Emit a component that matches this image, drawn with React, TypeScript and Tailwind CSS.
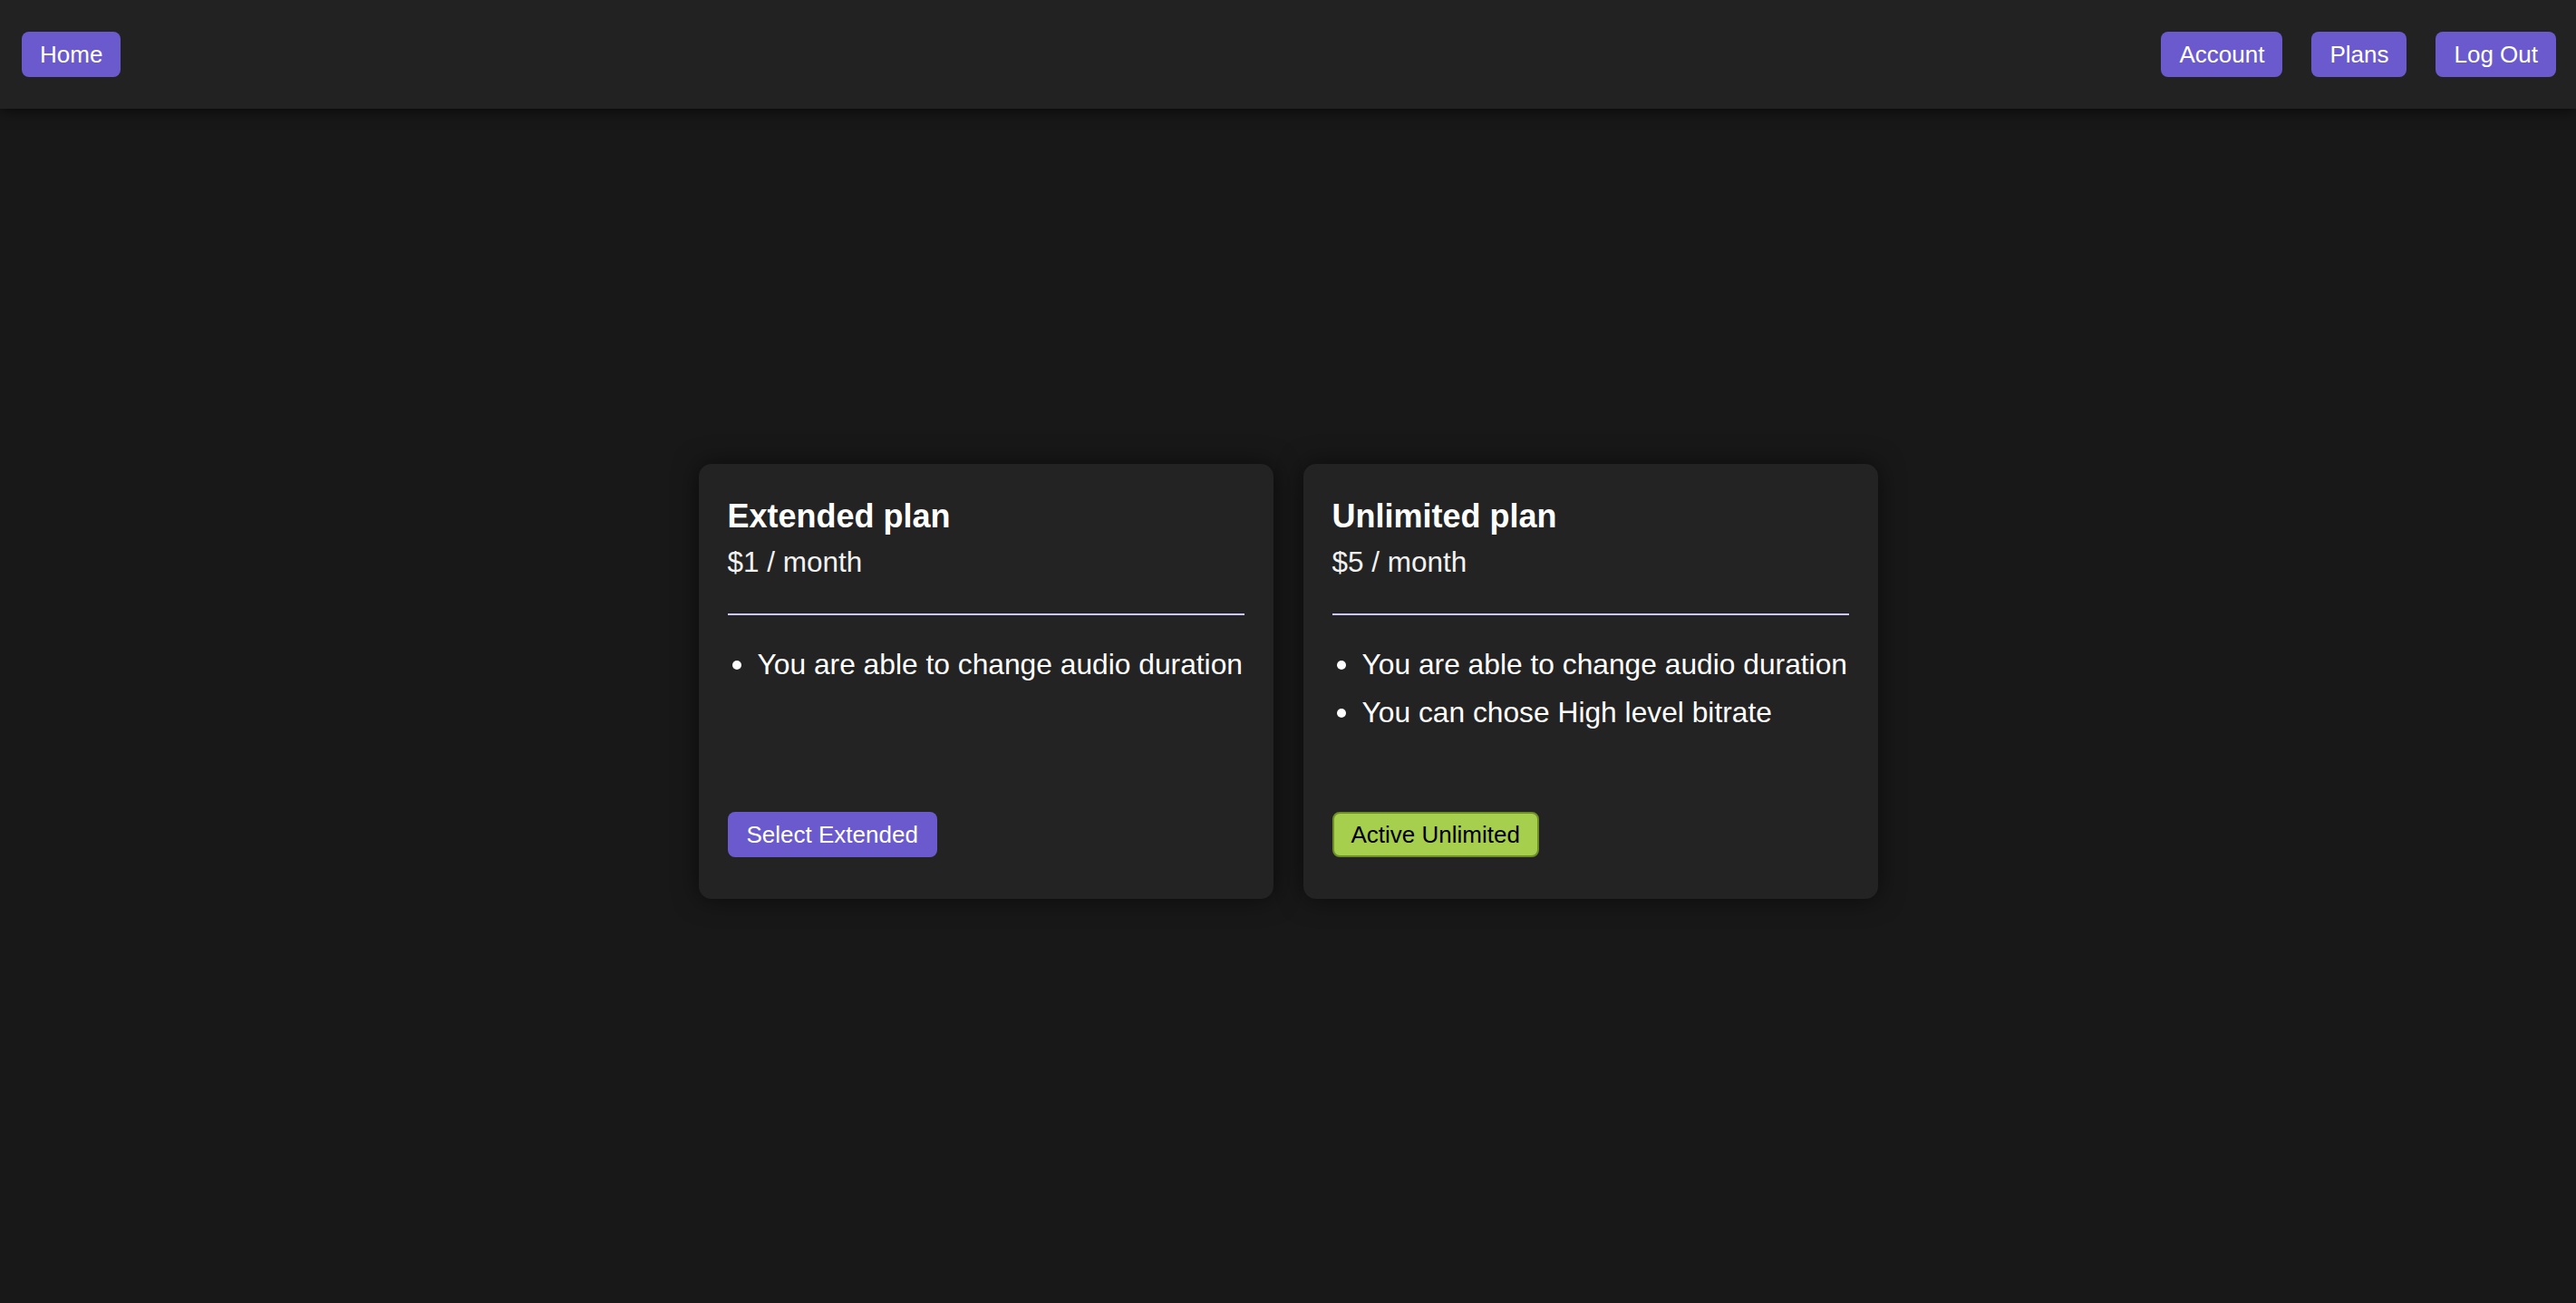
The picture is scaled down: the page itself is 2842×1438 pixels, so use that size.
import React from "react";

interface Plan {
  title: string;
  price: string;
  features: string[];
  active: boolean;
  action: string;
}

const plans: Plan[] = [
  {
    title: "Extended plan",
    price: "$1 / month",
    features: ["You are able to change audio duration"],
    active: false,
    action: "Select Extended",
  },
  {
    title: "Unlimited plan",
    price: "$5 / month",
    features: ["You are able to change audio duration", "You can chose High level bitrate"],
    active: true,
    action: "Active Unlimited",
  },
];

const NavButton: React.FC<{ label: string }> = ({ label }) => (
  <button className="h-[50px] px-[20px] rounded-[8px] bg-[#6a5acd] text-white text-[26px] leading-none">
    {label}
  </button>
);

const PlanCard: React.FC<{ plan: Plan }> = ({ plan }) => (
  <div className="w-[634px] h-[480px] bg-[#232323] rounded-[14px] px-[32px] pt-[37px] pb-[32px] flex flex-col shadow-[0_0_28px_rgba(0,0,0,0.55)]">
    <h3 className="text-[36px] leading-[41px] font-bold text-white">{plan.title}</h3>
    <p className="mt-[12px] text-[31.5px] leading-[37px] text-[#f2f2f2]">{plan.price}</p>
    <hr className="mt-[38px] h-[2px] border-0 bg-[#cfc6f8]" />
    <ul className="mt-[36px] flex flex-col gap-[16px]">
      {plan.features.map((f) => (
        <li
          key={f}
          className="flex items-center gap-[18px] pl-[5px] text-[31.75px] leading-[37px] text-white whitespace-nowrap"
        >
          <span className="w-[10px] h-[10px] rounded-full bg-white shrink-0" />
          {f}
        </li>
      ))}
    </ul>
    <div className="mt-auto mb-[14px]">
      {plan.active ? (
        <button className="h-[50px] px-[19px] rounded-[8px] border-2 border-[#6e8f24] bg-[#a6cf4d] text-black text-[26px] leading-none">
          {plan.action}
        </button>
      ) : (
        <button className="h-[50px] px-[21px] rounded-[8px] bg-[#6a5acd] text-white text-[26px] leading-none">
          {plan.action}
        </button>
      )}
    </div>
  </div>
);

export default function App() {
  return (
    <div className="h-[1438px] overflow-hidden bg-[#181818] font-['Liberation_Sans',Arial,sans-serif]">
      <header className="h-[120px] bg-[#222222] flex items-center justify-between pl-[24px] pr-[22px] shadow-[0_3px_14px_rgba(0,0,0,0.6)] relative">
        <NavButton label="Home" />
        <nav className="flex items-center gap-[32px]">
          <NavButton label="Account" />
          <NavButton label="Plans" />
          <NavButton label="Log Out" />
        </nav>
      </header>
      <main className="flex justify-center gap-[33px] pt-[392px]">
        {plans.map((p) => (
          <PlanCard key={p.title} plan={p} />
        ))}
      </main>
    </div>
  );
}
